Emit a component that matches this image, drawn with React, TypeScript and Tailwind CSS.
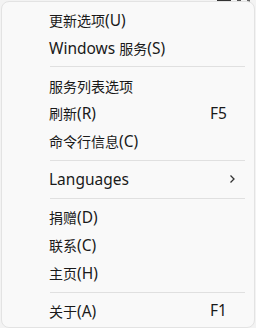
import React from "react";

type Item = { label: string; key?: string; sub?: boolean } | "sep";

const items: Item[] = [
  { label: "更新选项(U)" },
  { label: "Windows 服务(S)" },
  "sep",
  { label: "服务列表选项" },
  { label: "刷新(R)", key: "F5" },
  { label: "命令行信息(C)" },
  "sep",
  { label: "Languages", sub: true },
  "sep",
  { label: "捐赠(D)" },
  { label: "联系(C)" },
  { label: "主页(H)" },
  "sep",
  { label: "关于(A)", key: "F1" },
];

function Label({ text }: { text: string }) {
  const parts = text.match(/[\u4e00-\u9fff]+|[^\u4e00-\u9fff]+/g) || [];
  return (
    <span>
      {parts.map((p, i) =>
        /[\u4e00-\u9fff]/.test(p) ? (
          <span key={i} className="text-[14px]">
            {p}
          </span>
        ) : (
          <span key={i} className="text-[15.5px]">
            {p}
          </span>
        )
      )}
    </span>
  );
}

export default function App() {
  return (
    <div
      className="w-[256px] h-[328px] bg-[#f3f3f3] relative overflow-hidden"
      style={{ fontFamily: '"Noto Sans", "Noto Sans CJK SC", sans-serif' }}
    >
      <div className="absolute top-0 right-[6px] flex gap-[6px] items-start">
        <div className="w-[14px] h-[1px] bg-[#333]" />
        <div className="w-[4px] h-[1px] bg-[#555]" />
        <div className="w-[3px] h-[2px] bg-[#666]" />
      </div>
      <div className="absolute left-[1px] top-[1px] w-[254px] h-[327px] rounded-[8px] border border-[#e3e3e3] bg-[#f9f9f9] pt-[4px] pb-[2px] flex flex-col">
        {items.map((it, i) =>
          it === "sep" ? (
            <div key={i} className="h-[10px] flex items-center pl-[48px] pr-[9px]">
              <div className="h-[1px] w-full bg-[#e0e0e0]" />
            </div>
          ) : (
            <div
              key={i}
              className="h-[28px] flex items-center pl-[47px] pr-[18px] text-[#1a1a1a] leading-none"
            >
              <span className="flex-1">
                <Label text={it.label} />
              </span>
              {it.key && <span className="w-[26px] text-[15.5px]">{it.key}</span>}
              {it.sub && (
                <svg width="8" height="10" viewBox="0 0 8 10">
                  <path d="M2.5 1.5 L6 5 L2.5 8.5" stroke="#333" strokeWidth="1.3" fill="none" />
                </svg>
              )}
            </div>
          )
        )}
      </div>
    </div>
  );
}
